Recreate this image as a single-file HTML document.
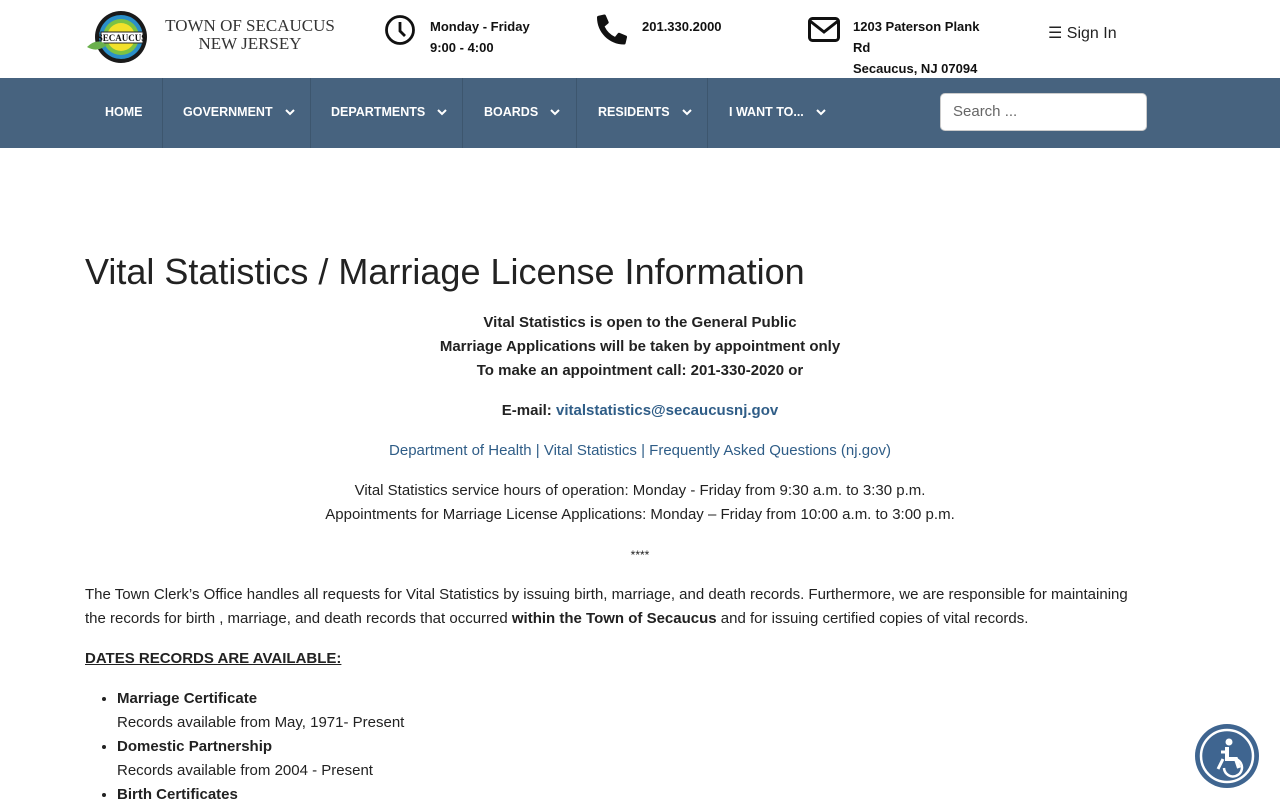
<!DOCTYPE html>
<html><head><meta charset="utf-8"><style>
*{margin:0;padding:0;box-sizing:border-box}
body{width:1280px;height:800px;overflow:hidden;background:#fff;font-family:"Liberation Sans",sans-serif;color:#222;position:relative}
.hdr{height:78px;position:relative}
.abs{position:absolute}
.info{font-size:13px;font-weight:bold;line-height:21px;color:#111}
nav{position:absolute;top:78px;left:0;width:1280px;height:70px;background:#47637f}
nav .it{position:absolute;top:0;height:70px;line-height:68px;color:#fff;font-size:12.5px;font-weight:bold;border-left:1px solid #3d566e}
nav .it svg{vertical-align:middle;margin-left:12px}
.search{position:absolute;left:940px;top:15px;width:207px;height:38px;background:#fff;border-radius:5px;border:1px solid #ccc;font-size:15px;color:#666;padding:9px 12px}
h1{position:absolute;left:85px;top:251px;font-size:36px;font-weight:normal;color:#222;letter-spacing:0}
.c{position:absolute;left:0;width:1280px;text-align:center;font-size:15px;line-height:24px}
a{color:#2f5d87;text-decoration:none}
.p{position:absolute;left:85px;font-size:15px;line-height:24px;width:1050px}
ul{position:absolute;left:117px;top:687px;font-size:15px;line-height:24px;list-style:disc}
</style></head><body>
<div class="hdr">
 <svg class="abs" style="left:85px;top:9px" width="66" height="56" viewBox="0 0 66 56">
  <circle cx="36" cy="28" r="26" fill="#1a1a1a"/>
  <circle cx="36" cy="28" r="22" fill="#2a8fc9"/>
  <circle cx="36" cy="28" r="18" fill="#7cc243"/>
  <circle cx="36" cy="28" r="14" fill="#f2e12a"/>
  <rect x="16" y="23" width="42" height="11" fill="#fff" stroke="#222"/>
  <text x="37" y="32" font-size="9" font-weight="bold" text-anchor="middle" fill="#111" font-family="Liberation Serif">SECAUCUS</text>
  <path d="M2 38 Q12 28 22 36 Q12 44 2 38Z" fill="#6ab04c"/>
 </svg>
 <div class="abs" style="left:150px;top:17px;font-family:'Liberation Serif',serif;color:#333;font-size:17px;line-height:18px;text-align:center;width:200px;white-space:nowrap">TOWN OF SECAUCUS<br>NEW JERSEY</div>
 <svg class="abs" style="left:384px;top:14px" width="32" height="32" viewBox="0 0 32 32"><circle cx="16" cy="16" r="13.5" fill="none" stroke="#111" stroke-width="2.8"/><path d="M16 8v9l5 5" fill="none" stroke="#111" stroke-width="2.8"/></svg>
 <div class="abs info" style="left:430px;top:16px">Monday - Friday<br>9:00 - 4:00</div>
 <svg class="abs" style="left:597px;top:14px" width="30" height="31" viewBox="0 0 512 512"><path fill="#111" d="M497 361l-112-48a24 24 0 00-28 7l-50 61A371 371 0 01130 204l61-50a24 24 0 007-28L150 14a24 24 0 00-28-14L18 24A24 24 0 000 48c0 257 208 464 464 464a24 24 0 0024-19l24-104a24 24 0 00-15-28z"/></svg>
 <div class="abs info" style="left:642px;top:16px">201.330.2000</div>
 <svg class="abs" style="left:808px;top:17px" width="32" height="25" viewBox="0 0 32 25"><rect x="1.5" y="1.5" width="29" height="22" rx="3" fill="none" stroke="#111" stroke-width="3"/><path d="M2 4l14 11 14-11" fill="none" stroke="#111" stroke-width="3"/></svg>
 <div class="abs info" style="left:853px;top:16px">1203 Paterson Plank<br>Rd<br>Secaucus, NJ 07094</div>
 <div class="abs" style="left:1048px;top:23px;font-size:16px;color:#222">☰ Sign In</div>
</div>
<nav>
 <div class="it" style="left:85px;width:78px;border:none;padding-left:20px">HOME</div>
 <div class="it" style="left:162px;width:148px;padding-left:20px">GOVERNMENT<svg width="10" height="7" viewBox="0 0 10 7"><path d="M1 1l4 4 4-4" fill="none" stroke="#fff" stroke-width="2"/></svg></div>
 <div class="it" style="left:310px;width:152px;padding-left:20px">DEPARTMENTS<svg width="10" height="7" viewBox="0 0 10 7"><path d="M1 1l4 4 4-4" fill="none" stroke="#fff" stroke-width="2"/></svg></div>
 <div class="it" style="left:462px;width:114px;padding-left:21px">BOARDS<svg width="10" height="7" viewBox="0 0 10 7"><path d="M1 1l4 4 4-4" fill="none" stroke="#fff" stroke-width="2"/></svg></div>
 <div class="it" style="left:576px;width:131px;padding-left:21px">RESIDENTS<svg width="10" height="7" viewBox="0 0 10 7"><path d="M1 1l4 4 4-4" fill="none" stroke="#fff" stroke-width="2"/></svg></div>
 <div class="it" style="left:707px;width:130px;padding-left:21px">I WANT TO...<svg width="10" height="7" viewBox="0 0 10 7"><path d="M1 1l4 4 4-4" fill="none" stroke="#fff" stroke-width="2"/></svg></div>
 <div class="search">Search ...</div>
</nav>
<h1>Vital Statistics / Marriage License Information</h1>
<div class="c" style="top:311px;font-weight:bold">Vital Statistics is open to the General Public<br>Marriage Applications will be taken by appointment only<br>To make an appointment call: 201-330-2020 or</div>
<div class="c" style="top:399px;font-weight:bold">E-mail: <a href="#">vitalstatistics@secaucusnj.gov</a></div>
<div class="c" style="top:439px"><a href="#">Department of Health | Vital Statistics | Frequently Asked Questions (nj.gov)</a></div>
<div class="c" style="top:479px">Vital Statistics service hours of operation: Monday - Friday from 9:30 a.m. to 3:30 p.m.<br>Appointments for Marriage License Applications: Monday – Friday from 10:00 a.m. to 3:00 p.m.</div>
<div class="c" style="top:543px;font-size:12px">****</div>
<div class="p" style="top:583px">The Town Clerk’s Office handles all requests for Vital Statistics by issuing birth, marriage, and death records. Furthermore, we are responsible for maintaining the records for birth , marriage, and death records that occurred <b>within the Town of Secaucus</b> and for issuing certified copies of vital records.</div>
<div class="p" style="top:647px;font-weight:bold;text-decoration:underline">DATES RECORDS ARE AVAILABLE:</div>
<ul>
<li><b>Marriage Certificate</b><br>Records available from May, 1971- Present</li>
<li><b>Domestic Partnership</b><br>Records available from 2004 - Present</li>
<li><b>Birth Certificates</b></li>
</ul>
<svg class="abs" style="left:1194px;top:723px" width="66" height="66" viewBox="0 0 66 66"><circle cx="33" cy="33" r="32" fill="#3f6590"/><circle cx="33" cy="33" r="26" fill="none" stroke="#fff" stroke-width="2.5"/><circle cx="35" cy="19" r="3.5" fill="#fff"/><path d="M33 24v12h9l3 9" fill="none" stroke="#fff" stroke-width="4"/><path d="M42 36a9 9 0 1 1-12 9" fill="none" stroke="#fff" stroke-width="2.5"/><path d="M27 29h6M24 46l5-10" stroke="#fff" stroke-width="3"/></svg>
</body></html>
